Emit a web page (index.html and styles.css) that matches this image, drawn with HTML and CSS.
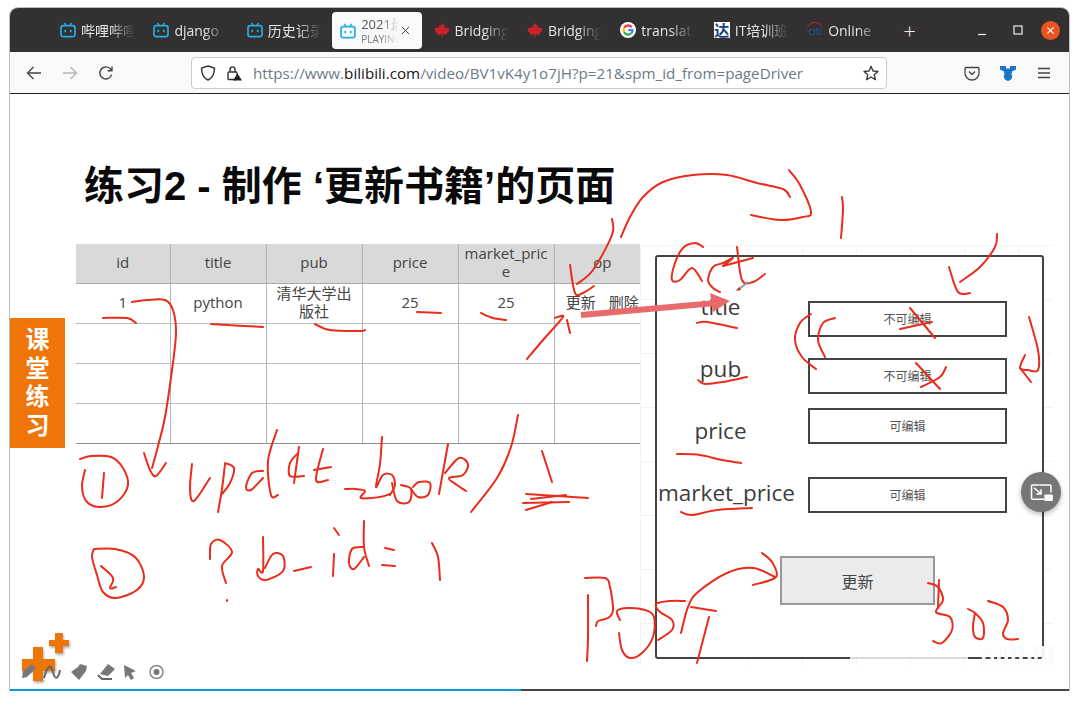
FILE: index.html
```html
<!DOCTYPE html>
<html lang="en">
<head>
    <meta charset="UTF-8">
    <meta name="viewport" content="width=device-width, initial-scale=1.0">
    <title>练习2 - 制作 更新书籍的页面</title>
    <link rel="stylesheet" href="styles.css">
</head>
<body>
    <svg class="defs" width="0" height="0">
        <symbol id="bili" viewBox="0 0 16 16">
            <rect x="1" y="3.6" width="14" height="11" rx="2.4" fill="none" stroke="#23ade5" stroke-width="1.7"/>
            <path d="M4.4 1L6 3.4M11.6 1L10 3.4" stroke="#23ade5" stroke-width="1.5" fill="none"/>
            <rect x="4.4" y="7.8" width="1.7" height="2.4" fill="#23ade5"/>
            <rect x="9.9" y="7.8" width="1.7" height="2.4" fill="#23ade5"/>
        </symbol>
        <symbol id="leaf" viewBox="0 0 16 16">
            <path d="M8 .8L9.5 3.4 11 2.8 10.4 6.4 12.2 4.8 12.8 6.2 15.4 5.8 14.6 8.4 15.6 9 12.4 11.6 12.8 12.8 8.5 12.4V15.4H7.5V12.4L3.2 12.8 3.6 11.6.4 9 1.4 8.4.6 5.8 3.2 6.2 3.8 4.8 5.6 6.4 5 2.8 6.5 3.4Z" fill="#c8232c"/>
        </symbol>
    </svg>

    <div class="window">
        <div class="tabbar">
            <div class="tab"><svg class="tab-icon"><use href="#bili"/></svg><span class="tab-label">哔哩哔哩</span></div>
            <div class="tab"><svg class="tab-icon"><use href="#bili"/></svg><span class="tab-label">django</span></div>
            <div class="tab"><svg class="tab-icon"><use href="#bili"/></svg><span class="tab-label">历史记录</span></div>
            <div class="tab tab-active">
                <svg class="tab-icon"><use href="#bili"/></svg>
                <span class="tab-label">2021最<small>PLAYING</small></span>
                <svg class="tab-close" viewBox="0 0 10 10"><path d="M1 1L9 9M9 1L1 9" stroke="#444" stroke-width="1.1"/></svg>
            </div>
            <div class="tab"><svg class="tab-icon"><use href="#leaf"/></svg><span class="tab-label">Bridging</span></div>
            <div class="tab"><svg class="tab-icon"><use href="#leaf"/></svg><span class="tab-label">Bridging</span></div>
            <div class="tab">
                <svg class="tab-icon" viewBox="0 0 16 16">
                    <circle cx="8" cy="8" r="8" fill="#fff"/>
                    <path d="M12.6 4.6A5.7 5.7 0 0 0 3.2 5L5 6.5A3.4 3.4 0 0 1 10.7 6Z" fill="#ea4335"/>
                    <path d="M3.2 5A5.7 5.7 0 0 0 3.2 11L5 9.5A3.4 3.4 0 0 1 5 6.5Z" fill="#fbbc05"/>
                    <path d="M3.2 11A5.7 5.7 0 0 0 12 12.1L10.2 10.7A3.4 3.4 0 0 1 5 9.5Z" fill="#34a853"/>
                    <path d="M12 12.1A5.7 5.7 0 0 0 13.6 6.9H8V9.1H11.1A3 3 0 0 1 10.2 10.7Z" fill="#4285f4"/>
                </svg>
                <span class="tab-label">translat</span>
            </div>
            <div class="tab"><span class="tab-icon da-icon">达</span><span class="tab-label">IT培训班</span></div>
            <div class="tab"><span class="tab-icon citi-icon">citi</span><span class="tab-label">Online</span></div>
            <div class="new-tab">+</div>
            <div class="window-controls">
                <svg class="ctrl" viewBox="0 0 12 12"><path d="M2 10.5H10" stroke="#eee" stroke-width="1.2"/></svg>
                <svg class="ctrl" viewBox="0 0 12 12"><rect x="2" y="2" width="8" height="8" fill="none" stroke="#eee" stroke-width="1.2"/></svg>
                <span class="ctrl-close"><svg viewBox="0 0 10 10"><path d="M1.5 1.5L8.5 8.5M8.5 1.5L1.5 8.5" stroke="#fff" stroke-width="1.3"/></svg></span>
            </div>
        </div>

        <div class="toolbar">
            <button class="tool-btn"><svg viewBox="0 0 16 16"><path d="M15 8H1.5M7.5 2L1.5 8l6 6" fill="none" stroke="#444" stroke-width="1.3"/></svg></button>
            <button class="tool-btn"><svg viewBox="0 0 16 16"><path d="M1 8H14.5M8.5 2l6 6-6 6" fill="none" stroke="#b5b5b5" stroke-width="1.3"/></svg></button>
            <button class="tool-btn"><svg viewBox="0 0 16 16"><path d="M13.6 9.6A6 6 0 1 1 12 3.6L14 5.6M14 1.4V5.8H9.6" fill="none" stroke="#444" stroke-width="1.4"/></svg></button>
            <div class="urlbar">
                <svg class="url-icon" viewBox="0 0 16 16"><path d="M8 1L14.5 3C14.5 9 12.5 13 8 15 3.5 13 1.5 9 1.5 3Z" fill="none" stroke="#333" stroke-width="1.4"/></svg>
                <svg class="url-icon" viewBox="0 0 16 16">
                    <rect x="2" y="7" width="9" height="7.5" rx="1" fill="none" stroke="#333" stroke-width="1.4"/>
                    <path d="M4 7V4.4a2.5 2.5 0 0 1 5 0V7" fill="none" stroke="#333" stroke-width="1.4"/>
                    <path d="M11.5 8.5L16 15.6H7Z" fill="#222"/>
                </svg>
                <span class="url-text">https://www.<b>bilibili.com</b>/video/BV1vK4y1o7jH?p=21&amp;spm_id_from=pageDriver</span>
                <svg class="url-star" viewBox="0 0 16 16"><path d="M8 1.2L10 6 15 6.4 11.2 9.7 12.4 14.7 8 12 3.6 14.7 4.8 9.7 1 6.4 6 6Z" fill="none" stroke="#333" stroke-width="1.3" stroke-linejoin="round"/></svg>
            </div>
            <button class="tool-btn btn-first"><svg viewBox="0 0 16 16"><path d="M2 2.5H14a1 1 0 0 1 1 1V8A7 7 0 0 1 1 8V3.5a1 1 0 0 1 1-1Z" fill="none" stroke="#444" stroke-width="1.3"/><path d="M5 6.5L8 9.5 11 6.5" fill="none" stroke="#444" stroke-width="1.4"/></svg></button>
            <button class="tool-btn"><svg viewBox="0 0 16 16"><path d="M0 1H6V3.5H10V1H16V4.500L12 6.500V8.500H4V6.500L0 4.500Z" fill="#1976c8"/><circle cx="8" cy="11.500" r="4.200" fill="#1976c8"/></svg></button>
            <button class="tool-btn"><svg viewBox="0 0 16 16"><path d="M2 3.5H14M2 8H14M2 12.5H14" stroke="#444" stroke-width="1.3"/></svg></button>
        </div>

        <div class="slide">
            <div class="slide-left">
                <h1 class="slide-title">练习2 - 制作 ‘更新书籍’的页面</h1>
                <div class="table-clip">
                    <table class="book-table">
                        <colgroup>
                            <col class="col-id"><col><col><col><col><col>
                        </colgroup>
                        <tr>
                            <th>id</th><th>title</th><th>pub</th><th>price</th><th class="th-wrap">market_price</th><th>op</th>
                        </tr>
                        <tr>
                            <td>1</td><td>python</td><td class="td-wrap">清华大学出版社</td><td>25</td><td>25</td>
                            <td><span class="op-link">更新</span><span class="op-link">删除</span></td>
                        </tr>
                        <tr><td></td><td></td><td></td><td></td><td></td><td></td></tr>
                        <tr><td></td><td></td><td></td><td></td><td></td><td></td></tr>
                        <tr class="row-last"><td></td><td></td><td></td><td></td><td></td><td></td></tr>
                    </table>
                </div>
            </div>

            <div class="sketch">
                <div class="wireframe">
                    <div class="labels">
                        <div class="label">title</div>
                        <div class="label">pub</div>
                        <div class="label">price</div>
                        <div class="label label-wide">market_price</div>
                    </div>
                    <div class="fields">
                        <div class="field">不可编辑</div>
                        <div class="field field-a">不可编辑</div>
                        <div class="field field-b">可编辑</div>
                        <div class="field field-c">可编辑</div>
                    </div>
                    <div class="update-btn">更新</div>
                </div>
            </div>

            <div class="badge">课堂练习</div>

            <svg class="ink" viewBox="10 94 1059 596">
                <!-- top arcs -->
                <polyline points="621,237 630,217 643,197 663,182 693,175 727,175 757,183 783,189 790,197"/>
                <polyline points="789,170 800,185 811,212 803,217 780,220 751,215"/>
                <polyline points="842,197 843,210 841,238"/>
                <polyline points="612,219 612,235 593,270 577,284"/>
                <polyline points="570,265 575,293 583,293 594,286"/>
                <!-- Get -->
                <polyline points="703,247 695,243 683,248 675,263 672,280 680,280 692,268 702,281"/>
                <polyline points="723,266 733,258 723,263 713,267 708,280 713,288 720,292"/>
                <polyline points="737,247 742,280 753,282 765,274"/>
                <polyline points="723,266 753,258"/>
                <!-- underlines in table -->
                <polyline points="103,318 127,318 136,323"/>
                <polyline points="211,324 227,325 263,327"/>
                <polyline points="315,324 330,330 360,331 365,330"/>
                <polyline points="417,312 441,313"/>
                <polyline points="481,313 493,318 506,320"/>
                <polyline points="527,359 543,340 563,317 555,318"/>
                <polyline points="567,320 570,333"/>
                <!-- long arrow down -->
                <polyline points="132,302 147,300 165,300 173,310 176,333 172,370 165,417 157,450 152,468"/>
                <polyline points="144,453 150,470 156,476 166,463"/>
                <!-- 1 update_book/1 -->
                <polyline points="80,459 91,456 111,457 123,468 128,485 118,501 101,507 87,502 82,487 85,470"/>
                <polyline points="104,473 102,498"/>
                <polyline points="192,464 190,489 194,501 210,478"/>
                <polyline points="225,464 222,489 218,512"/>
                <polyline points="225,463 234,468 230,483 222,494"/>
                <polyline points="263,471 252,473 246,487 251,490 263,478"/>
                <polyline points="277,430 268,461 271,495 278,495"/>
                <polyline points="299,447 294,483"/>
                <polyline points="297,454 290,463 290,476 304,476"/>
                <polyline points="323,449 316,480 328,480"/>
                <polyline points="314,470 331,467"/>
                <polyline points="345,489 356,489 365,491 361,498 380,497 390,494"/>
                <polyline points="382,437 380,464 376,487 383,475 392,475 395,485 390,495"/>
                <polyline points="392,483 397,501 409,502 411,489 401,485"/>
                <polyline points="411,489 418,497 428,495 430,483 419,482 413,487"/>
                <polyline points="448,444 439,494"/>
                <polyline points="445,473 459,458 468,464 463,475 449,478 457,485 466,491"/>
                <polyline points="518,415 511,447 497,478 471,512"/>
                <polyline points="542,451 552,482"/>
                <polyline points="526,494 588,498"/>
                <polyline points="523,503 569,502"/>
                <polyline points="526,510 552,502"/>
                <polyline points="531,499 566,495"/>
                <!-- 2 ?b_id=1 -->
                <polyline points="94,549 115,549 135,557 144,576 137,590 116,598 103,592 97,575 92,557 94,549"/>
                <polyline points="101,566 113,578 110,588 116,587"/>
                <polyline points="210,559 211,544 220,540 232,552 222,566 226,583"/>
                <polyline points="227,600 227,601"/>
                <polyline points="263,537 263,571 258,569 258,576 266,580 283,571 283,556 273,554 265,568"/>
                <polyline points="294,571 311,567"/>
                <polyline points="334,528 339,535"/>
                <polyline points="334,554 333,576"/>
                <polyline points="364,521 364,547 369,566"/>
                <polyline points="363,547 352,549 349,563 354,569 364,557"/>
                <polyline points="385,548 394,550"/>
                <polyline points="382,565 395,566"/>
                <polyline points="432,543 438,557 440,580"/>
                <!-- marks on wireframe -->
                <polyline points="997,234 995,247 980,267 960,282"/>
                <polyline points="949,267 958,292 970,293"/>
                <polyline points="811,314 800,323 795,340 802,357 816,369"/>
                <polyline points="835,318 823,323 818,340 825,357"/>
                <polyline points="910,308 935,338"/>
                <polyline points="900,329 932,322"/>
                <polyline points="916,363 940,389"/>
                <polyline points="921,387 940,377 946,367"/>
                <polyline points="1029,317 1038,350 1038,370 1028,370 1020,368 1025,355"/>
                <polyline points="1020,368 1031,382"/>
                <polyline points="697,323 707,322 737,328"/>
                <polyline points="698,380 705,384 723,382 747,377"/>
                <polyline points="677,454 700,455 722,460 741,463"/>
                <polyline points="681,512 692,515 717,510 752,508"/>
                <!-- POST and 302 -->
                <polyline points="588,595 588,638 587,661"/>
                <polyline points="585,578 605,578 610,587 613,610 608,618 598,621 596,626"/>
                <polyline points="620,620 617,611 628,608 645,610 654,617 653,637 642,653 630,658 622,650 619,633"/>
                <polyline points="685,601 670,601 656,604 660,612 672,620 672,630 658,640"/>
                <polyline points="681,633 688,607 698,592 727,573 753,568 775,577"/>
                <polyline points="762,553 772,562 776,577 753,585"/>
                <polyline points="691,607 716,611"/>
                <polyline points="709,617 697,663"/>
                <polyline points="928,583 938,587 943,600 936,612 950,617 952,630 942,643 933,641"/>
                <polyline points="939,580 938,608"/>
                <polyline points="968,609 975,613 983,623 983,638 975,637 973,627 975,613"/>
                <polyline points="988,601 1003,607 1008,620 1003,633 1007,639 1018,639"/>
                <!-- pink pointer arrow -->
                <path class="pointer" d="M581 315L716 303"/>
                <path class="pointer-head" d="M730 301L710 293 713 312Z"/>
                <path class="pencil" d="M739 289L748 282"/>
                <path class="pencil-tip" d="M736 291L739 287 741 290Z"/>
            </svg>

            <svg class="tools" viewBox="10 625 190 64">
                <g class="plus">
                    <path d="M33 647H43V659H55V671H43V681H33V671H22V659H33Z"/>
                    <path d="M55 633H63V640H69V646H63V653H55V646H49V640H55Z"/>
                </g>
                <g class="tool-glyphs">
                    <path d="M22 678L23 671 32 664 36 668 27 677Z"/>
                    <path class="wave" d="M44 678C48 664 51 664 53 672S58 680 60 670"/>
                    <path d="M71 672L78 667 80 664 87 666 86 671 79 680Z"/>
                    <path d="M100 674L108 664 115 669 108 676Z"/>
                    <path class="wave" d="M98 675L102 679H112"/>
                    <path d="M124 665L136 671 131 673 134 678 131 680 128 675 125 678Z"/>
                    <circle class="ring" cx="156.500" cy="672" r="6.500"/>
                    <circle cx="156.500" cy="672" r="3"/>
                </g>
            </svg>

            <div class="float-btn">
                <svg viewBox="0 0 24 20">
                    <path d="M10 2H2.500A1 1 0 0 0 1.500 3V16A1 1 0 0 0 2.500 17H15" fill="none" stroke="#fff" stroke-width="1.6"/>
                    <path d="M10 2H21A1 1 0 0 1 22 3V10" fill="none" stroke="#fff" stroke-width="1.6"/>
                    <path d="M4 5L11 11M11.500 6.500V11.500H6.500" fill="none" stroke="#fff" stroke-width="1.6"/>
                    <rect x="15" y="12" width="9" height="7" rx="1" fill="#fff"/>
                </svg>
            </div>

            <div class="watermark"><span class="watermark-strip"></span><span class="watermark-logo">bilibili</span></div>
        </div>

        <div class="progress"><div class="progress-fill" style="width: 48.3%"></div></div>
    </div>
    <script src="ink.js"></script>
</body>
</html>
```

FILE: styles.css
```css
html, body {
    margin: 0;
    height: 100%;
    overflow: hidden;
    background: #fff;
}
body {
    font-family: "Open Sans", "Noto Sans CJK SC", sans-serif;
}
.defs {
    position: absolute;
}

.window {
    width: 1059px;
    margin: 7px 0 0 9px;
    border: 1px solid #bdbdbd;
    border-bottom: none;
    border-radius: 9px 9px 0 0;
}

/* tabs */
.tabbar {
    display: flex;
    height: 44px;
    padding-left: 40px;
    background: #323031;
    border-radius: 8px 8px 0 0;
}
.tab {
    display: flex;
    align-items: center;
    flex: none;
    width: 93.4px;
    padding-left: 10px;
    box-sizing: border-box;
    color: #e4e4e4;
    font-size: 14px;
}
.tab-icon {
    flex: none;
    width: 16px;
    height: 16px;
    margin-right: 5px;
}
.tab-label {
    flex: none;
    width: 53px;
    overflow: hidden;
    white-space: nowrap;
    -webkit-mask-image: linear-gradient(to right, #000 55%, transparent 100%);
    mask-image: linear-gradient(to right, #000 55%, transparent 100%);
}
.tab-active {
    position: relative;
    width: 89.4px;
    height: 37px;
    margin: 4px 2px 0;
    padding-left: 8px;
    background: #f9f9fa;
    border-radius: 4px;
    color: #555;
    font-size: 13px;
    line-height: 17px;
}
.tab-active .tab-label {
    width: 37px;
}
.tab-active small {
    display: block;
    font-size: 10px;
    line-height: 12px;
    color: #777;
}
.tab-close {
    width: 9px;
    height: 9px;
    margin-left: 3px;
}
.da-icon {
    background: #fff;
    color: #15407f;
    font-size: 15px;
    font-weight: 700;
    line-height: 16px;
    text-align: center;
}
.citi-icon {
    color: #1a5fa8;
    font-size: 10px;
    line-height: 16px;
    border-top: 1px solid #c8232c;
    border-radius: 8px 8px 0 0;
    box-sizing: border-box;
    text-align: center;
}
.new-tab {
    flex: none;
    width: 18px;
    margin-left: 10px;
    color: #eee;
    font-size: 22px;
    line-height: 44px;
    font-weight: 300;
    text-align: center;
}
.window-controls {
    display: flex;
    align-items: center;
    gap: 24px;
    margin-left: auto;
    padding-right: 9px;
}
.ctrl {
    width: 12px;
    height: 12px;
}
.ctrl-close {
    display: flex;
    align-items: center;
    justify-content: center;
    width: 19px;
    height: 19px;
    margin-left: -6.5px;
    background: #e95420;
    border-radius: 50%;
}
.ctrl-close svg {
    width: 9px;
    height: 9px;
}

/* nav bar */
.toolbar {
    display: flex;
    align-items: center;
    height: 41px;
    padding-left: 6px;
    background: #f9f9fa;
    border-bottom: 1px solid #222;
}
.tool-btn {
    display: flex;
    align-items: center;
    justify-content: center;
    flex: none;
    width: 36px;
    height: 32px;
    padding: 0;
    background: none;
    border: none;
}
.tool-btn svg {
    width: 16px;
    height: 16px;
}
.btn-first {
    margin-left: 67px;
}
.urlbar {
    display: flex;
    align-items: center;
    flex: none;
    width: 696px;
    height: 32px;
    margin-left: 67px;
    padding: 0 7px 0 8px;
    box-sizing: border-box;
    background: #fff;
    border: 1px solid #ccc;
    border-radius: 4px;
}
.url-icon {
    flex: none;
    width: 16px;
    height: 16px;
    margin-right: 10px;
}
.url-text {
    flex: 1;
    margin-left: 1px;
    color: #6d7a86;
    font-size: 15.2px;
    white-space: nowrap;
}
.url-text b {
    color: #15141a;
    font-weight: 400;
}
.url-star {
    flex: none;
    width: 16px;
    height: 16px;
}

/* slide */
.slide {
    position: relative;
    display: flex;
    height: 595px;
    overflow: hidden;
    background: #fff;
}
.slide-left {
    flex: none;
    width: 564px;
    padding-left: 66px;
}
.slide-title {
    margin: 0 0 36px;
    padding: 70px 0 0 8px;
    color: #0a0a0a;
    font-family: "Liberation Sans", "Noto Sans CJK SC", sans-serif;
    font-size: 40px;
    line-height: 44px;
    font-weight: 700;
    white-space: nowrap;
}
.table-clip {
    width: 564px;
    overflow: hidden;
}
.book-table {
    width: 574px;
    table-layout: fixed;
    border-collapse: collapse;
    color: #444;
    font-size: 15px;
    text-align: center;
}
.col-id {
    width: 94px;
}
.book-table th,
.book-table td {
    height: 40px;
    padding: 0 4px 2px;
    box-sizing: border-box;
    font-weight: 400;
    line-height: 18px;
    border-right: 1px solid #b4b4b4;
    border-bottom: 1px solid #bcbcbc;
}
.book-table th {
    height: 39px;
    background: #d9d9d9;
    border-bottom-color: #a8a8a8;
}
.book-table th:last-child,
.book-table td:last-child {
    border-right: none;
}
.book-table .row-last td {
    border-bottom-color: #8e8e8e;
}
.th-wrap {
    word-break: break-all;
}
.op-link + .op-link {
    margin-left: 13px;
}

/* wireframe on the right */
.sketch {
    flex: none;
    width: 412px;
    height: 420px;
    margin-top: 151px;
    padding: 10px 0 0 15px;
    box-sizing: border-box;
    background-color: #fff;
    background-image:
        linear-gradient(#f3f3f3 1px, transparent 1px),
        linear-gradient(90deg, #f3f3f3 1px, transparent 1px);
    background-size: 54px 54px;
}
.wireframe {
    display: grid;
    grid-template-columns: 151px 199px;
    grid-template-rows: 299px auto;
    width: 389px;
    height: 404px;
    box-sizing: border-box;
    background: #fff;
    border: 2px solid #444;
    border-radius: 3px;
}
.labels {
    padding-top: 19px;
}
.label {
    color: #3c3c3c;
    font-size: 22.5px;
    line-height: 62px;
    text-align: center;
    padding-right: 24px;
    white-space: nowrap;
}
.label-wide {
    padding-right: 12px;
}
.fields {
    padding-top: 44px;
}
.field {
    display: flex;
    align-items: center;
    justify-content: center;
    height: 36px;
    box-sizing: border-box;
    border: 2px solid #444;
    color: #555;
    font-size: 12px;
}
.field-a {
    margin-top: 21px;
}
.field-b {
    margin-top: 14px;
}
.field-c {
    margin-top: 33px;
}
.update-btn {
    grid-column: 1 / 3;
    display: flex;
    align-items: center;
    justify-content: center;
    width: 155px;
    height: 49px;
    margin-left: 123px;
    box-sizing: border-box;
    background: #ebebeb;
    border: 2px solid #999;
    color: #444;
    font-size: 16px;
}

.badge {
    position: absolute;
    left: 0;
    top: 224px;
    width: 55px;
    height: 130px;
    padding-top: 2px;
    box-sizing: border-box;
    background: #ef7509;
    color: #fff;
    font-family: "Noto Sans CJK SC", sans-serif;
    font-size: 24px;
    font-weight: 700;
    line-height: 55px;
    letter-spacing: 4.5px;
    text-align: center;
    writing-mode: vertical-rl;
}

/* pen strokes */
.ink {
    position: absolute;
    left: 0;
    top: 0;
    width: 1059px;
    height: 596px;
}
.ink polyline,
.ink .stroke {
    fill: none;
    stroke: #e92c1c;
    stroke-width: 2;
    stroke-linecap: round;
    stroke-linejoin: round;
}
.pointer {
    fill: none;
    stroke: #e86a6a;
    stroke-width: 6;
}
.pointer-head {
    fill: #e86a6a;
}
.pencil {
    stroke: #999;
    stroke-width: 2;
}
.pencil-tip {
    fill: #c0282a;
}

.tools {
    position: absolute;
    left: 0;
    top: 531px;
    width: 190px;
    height: 64px;
}
.plus {
    fill: #ee7508;
    filter: drop-shadow(1px 2px 1px rgba(0, 0, 0, 0.3));
}
.tool-glyphs {
    fill: #777;
}
.tool-glyphs .wave {
    fill: none;
    stroke: #666;
    stroke-width: 2;
}
.tool-glyphs .ring {
    fill: none;
    stroke: #888;
    stroke-width: 1.500;
}

.float-btn {
    position: absolute;
    left: 1011px;
    top: 378px;
    display: flex;
    align-items: center;
    justify-content: center;
    width: 40px;
    height: 40px;
    background: #777;
    border-radius: 50%;
    box-shadow: 0 2px 5px rgba(0, 0, 0, 0.3);
}
.float-btn svg {
    width: 23px;
    height: 19px;
}

.watermark {
    position: absolute;
    left: 840px;
    top: 545px;
    display: flex;
    align-items: center;
    gap: 12px;
    width: 212px;
    height: 30px;
    filter: blur(0.6px);
}
.watermark-strip {
    width: 118px;
    height: 10px;
    background: rgba(255, 255, 255, 0.8);
}
.watermark-logo {
    color: rgba(255, 255, 255, 0.92);
    font-size: 24px;
    font-weight: 700;
    text-shadow: 0 0 1px rgba(0, 0, 0, 0.12);
}

.progress {
    height: 2px;
    background: #444;
}
.progress-fill {
    height: 2px;
    background: #0a9ad6;
}
```

FILE: ink.js
```js
// turn the traced pen strokes into smooth curves
const SVG_NS = 'http://www.w3.org/2000/svg';

document.querySelectorAll('.ink polyline').forEach((line) => {
    const pts = line.getAttribute('points').trim().split(/\s+/).map((p) => p.split(',').map(Number));
    let d = `M${pts[0][0]} ${pts[0][1]}`;

    for (let i = 0; i < pts.length - 1; i++) {
        const p0 = pts[Math.max(i - 1, 0)];
        const p1 = pts[i];
        const p2 = pts[i + 1];
        const p3 = pts[Math.min(i + 2, pts.length - 1)];
        const c1 = [p1[0] + (p2[0] - p0[0]) / 6, p1[1] + (p2[1] - p0[1]) / 6];
        const c2 = [p2[0] - (p3[0] - p1[0]) / 6, p2[1] - (p3[1] - p1[1]) / 6];
        d += `C${c1[0]} ${c1[1]} ${c2[0]} ${c2[1]} ${p2[0]} ${p2[1]}`;
    }

    const path = document.createElementNS(SVG_NS, 'path');
    path.setAttribute('class', 'stroke');
    path.setAttribute('d', d);
    line.replaceWith(path);
});
```
